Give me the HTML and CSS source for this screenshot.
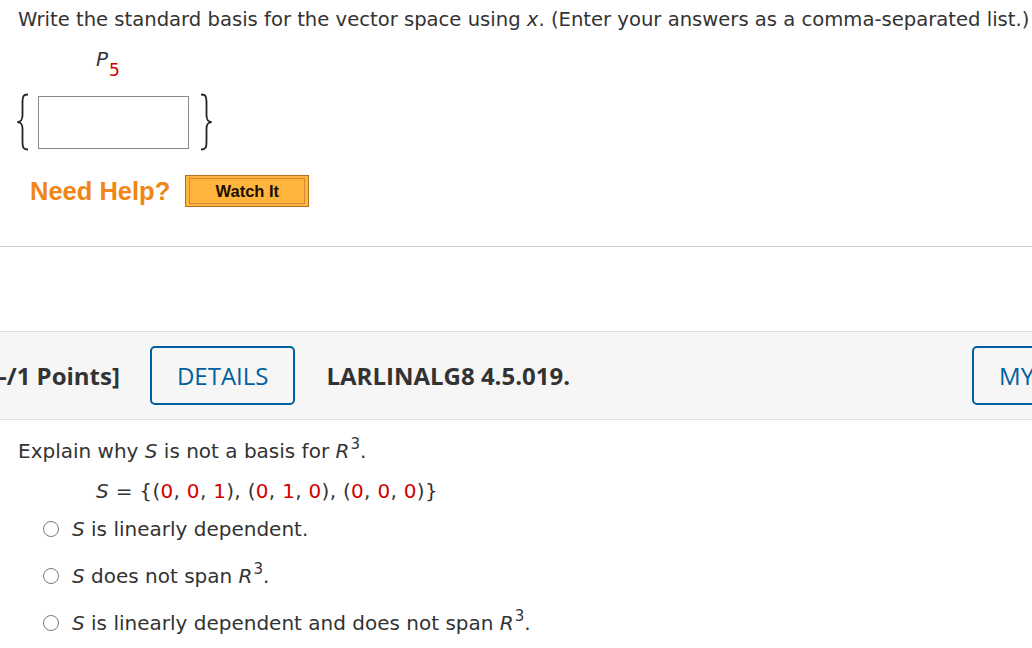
FILE: index.html
```html
<!DOCTYPE html>
<html>
<head>
<meta charset="utf-8">
<link rel="stylesheet" href="styles.css">
</head>
<body>
<section class="q1">
  <p class="prompt">Write the standard basis for the vector space using <i>x</i>. (Enter your answers as a comma-separated list.)</p>
  <div class="space"><i>P</i><span class="sub">5</span></div>
  <div class="answer">
    <svg class="brace" width="14" height="58" viewBox="0 0 14 58"><path d="M12 1.5 C7 1.5 6.5 4 6.5 9 L6.5 22 C6.5 27 5 28.5 1.5 29 C5 29.5 6.5 31 6.5 36 L6.5 49 C6.5 54 7 56.5 12 56.5" fill="none" stroke="#222" stroke-width="1.8"/></svg>
    <input class="box" type="text">
    <svg class="brace" width="14" height="58" viewBox="0 0 14 58"><path d="M2 1.5 C7 1.5 7.5 4 7.5 9 L7.5 22 C7.5 27 9 28.5 12.5 29 C9 29.5 7.5 31 7.5 36 L7.5 49 C7.5 54 7 56.5 2 56.5" fill="none" stroke="#222" stroke-width="1.8"/></svg>
  </div>
  <div class="help">
    <span class="need">Need Help?</span>
    <button class="watch"><span class="watch-inner">Watch It</span></button>
  </div>
</section>
<div class="sep"></div>
<div class="qhead">
  <span class="points">-/1 Points]</span>
  <span class="details">DETAILS</span>
  <span class="code">LARLINALG8 4.5.019.</span>
  <span class="my">MY NOTES</span>
</div>
<section class="q2">
  <p class="explain">Explain why <i>S</i> is not a basis for <i>R</i><sup>3</sup>.</p>
  <p class="set"><i>S</i> = {(<b class="r">0</b>, <b class="r">0</b>, <b class="r">1</b>), (<b class="r">0</b>, <b class="r">1</b>, <b class="r">0</b>), (<b class="r">0</b>, <b class="r">0</b>, <b class="r">0</b>)}</p>
  <ul class="options">
    <li class="opt"><span class="radio"></span><span><i>S</i> is linearly dependent.</span></li>
    <li class="opt"><span class="radio"></span><span><i>S</i> does not span <i>R</i><sup>3</sup>.</span></li>
    <li class="opt"><span class="radio"></span><span><i>S</i> is linearly dependent and does not span <i>R</i><sup>3</sup>.</span></li>
  </ul>
</section>
</body>
</html>
```
FILE: styles.css
```css
html, body {
  margin: 0;
  padding: 0;
  background: #fff;
  width: 1032px;
  height: 648px;
  overflow: hidden;
}
body {
  font-family: "DejaVu Sans", Verdana, sans-serif;
  color: #333;
  font-size: 20px;
}
p { margin: 0; }
i { font-style: italic; }

.q1 {
  padding: 6px 0 0 18px;
  display: flex;
  flex-direction: column;
  height: 240px;
  box-sizing: border-box;
}
.prompt {
  white-space: nowrap;
  line-height: 28px;
  font-size: 19.6px;
}
.space {
  margin: 13px 0 0 78px;
  height: 30px;
  line-height: 24px;
  font-size: 20px;
}
.space .sub {
  color: #d40000;
  font-size: 17px;
  position: relative;
  top: 10px;
  margin-left: 1px;
}
.answer {
  display: flex;
  align-items: center;
  margin-top: 16px;
  height: 58px;
}
.brace { display: block; margin-left: -2px; }
.box {
  width: 151px;
  height: 53px;
  box-sizing: border-box;
  border: 1px solid #8a8a8a;
  margin: 0 12px 0 8px;
  padding: 0;
  background: #fff;
}
.help {
  display: flex;
  align-items: center;
  margin: 24px 0 0 12px;
  gap: 15px;
}
.need {
  font-family: "Liberation Sans", Arial, sans-serif;
  font-weight: bold;
  font-size: 25.5px;
  color: #f08616;
}
.watch {
  width: 124px;
  height: 32px;
  border: 1px solid #b86f1f;
  background: #ffb43e;
  padding: 2px 3px;
  box-sizing: border-box;
  display: flex;
  margin: 0;
}
.watch-inner {
  flex: 1;
  border: 1px solid #d18a33;
  display: flex;
  align-items: center;
  justify-content: center;
  font-family: "Liberation Sans", Arial, sans-serif;
  font-weight: bold;
  font-size: 16.5px;
  color: #1a1000;
}
.sep {
  height: 1px;
  background: #d0d0d0;
  margin-top: 6px;
}
.qhead {
  margin-top: 84px;
  height: 89px;
  background: #f6f6f6;
  border-top: 1px solid #dedede;
  border-bottom: 1px solid #dedede;
  box-sizing: border-box;
  display: flex;
  align-items: center;
  font-family: "Open Sans", sans-serif;
  font-size: 24px;
  color: #333;
  white-space: nowrap;
  overflow: hidden;
}
.points {
  font-weight: bold;
  margin-left: -1px;
}
.details, .my {
  border: 2.5px solid #00609e;
  border-radius: 5px;
  color: #00609e;
  height: 59px;
  box-sizing: border-box;
  display: flex;
  align-items: center;
  padding: 0 25px;
}
.details { margin-left: 30px; }
.code {
  font-weight: bold;
  margin-left: 31px;
}
.my { margin-left: 402px; }

.q2 {
  padding: 16px 0 0 18px;
}
.explain { line-height: 30px; }
sup {
  font-size: 15px;
  vertical-align: 0;
  position: relative;
  top: -9px;
  margin-left: 1px;
}
.set {
  margin: 8px 0 0 78px;
  line-height: 30px;
  letter-spacing: 0.3px;
}
.r { color: #d40000; font-weight: normal; }
.options {
  list-style: none;
  margin: -1px 0 0 25px;
  padding: 0;
}
.opt {
  display: flex;
  align-items: center;
  height: 47px;
  gap: 13px;
}
.radio {
  width: 16px;
  height: 16px;
  border: 1.5px solid #7a7a7a;
  border-radius: 50%;
  box-sizing: border-box;
  background: #fff;
}
```
